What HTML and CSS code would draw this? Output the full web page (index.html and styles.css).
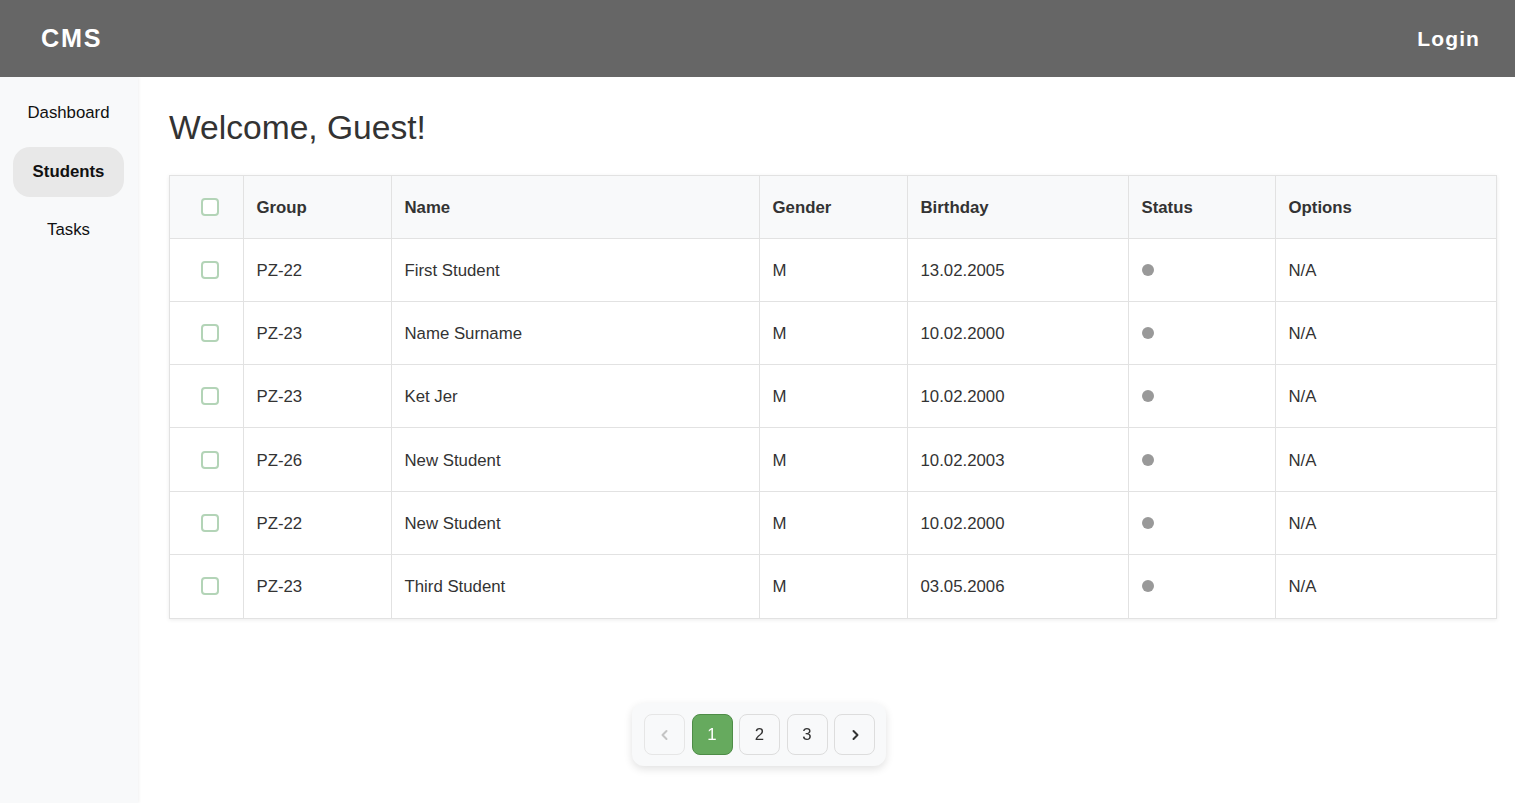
FILE: index.html
```html
<!DOCTYPE html>
<html lang="en">
<head>
<meta charset="utf-8">
<title>CMS</title>
<link rel="stylesheet" href="styles.css">
</head>
<body>
<header class="topbar">
  <div class="logo">CMS</div>
  <div class="login">Login</div>
</header>
<div class="layout">
  <nav class="sidebar">
    <a class="nav-item">Dashboard</a>
    <a class="nav-item active">Students</a>
    <a class="nav-item">Tasks</a>
  </nav>
  <main class="content">
    <h1 class="title">Welcome, Guest!</h1>
    <div class="table-wrap">
      <table class="students">
        <colgroup>
          <col class="c-check"><col class="c-group"><col class="c-name"><col class="c-gender"><col class="c-birth"><col class="c-status"><col class="c-options">
        </colgroup>
        <thead>
          <tr><th class="chk"><span class="box"></span></th><th>Group</th><th>Name</th><th>Gender</th><th>Birthday</th><th>Status</th><th>Options</th></tr>
        </thead>
        <tbody>
          <tr><td class="chk"><span class="box"></span></td><td>PZ-22</td><td>First Student</td><td>M</td><td>13.02.2005</td><td><span class="dot"></span></td><td>N/A</td></tr>
          <tr><td class="chk"><span class="box"></span></td><td>PZ-23</td><td>Name Surname</td><td>M</td><td>10.02.2000</td><td><span class="dot"></span></td><td>N/A</td></tr>
          <tr><td class="chk"><span class="box"></span></td><td>PZ-23</td><td>Ket Jer</td><td>M</td><td>10.02.2000</td><td><span class="dot"></span></td><td>N/A</td></tr>
          <tr><td class="chk"><span class="box"></span></td><td>PZ-26</td><td>New Student</td><td>M</td><td>10.02.2003</td><td><span class="dot"></span></td><td>N/A</td></tr>
          <tr><td class="chk"><span class="box"></span></td><td>PZ-22</td><td>New Student</td><td>M</td><td>10.02.2000</td><td><span class="dot"></span></td><td>N/A</td></tr>
          <tr><td class="chk"><span class="box"></span></td><td>PZ-23</td><td>Third Student</td><td>M</td><td>03.05.2006</td><td><span class="dot"></span></td><td>N/A</td></tr>
        </tbody>
      </table>
    </div>
  </main>
</div>
<div class="pager">
  <button class="pg disabled"><svg width="14" height="14" viewBox="0 0 14 14"><path d="M8.5 3 L4.5 7 L8.5 11" fill="none" stroke="#c4c4c4" stroke-width="2" stroke-linecap="round" stroke-linejoin="round"/></svg></button>
  <button class="pg current">1</button>
  <button class="pg">2</button>
  <button class="pg">3</button>
  <button class="pg"><svg width="14" height="14" viewBox="0 0 14 14"><path d="M5.5 3 L9.5 7 L5.5 11" fill="none" stroke="#333" stroke-width="2" stroke-linecap="round" stroke-linejoin="round"/></svg></button>
</div>
</body>
</html>
```
FILE: styles.css
```css
* { box-sizing: border-box; }
html, body { margin: 0; padding: 0; }
body {
  font-family: "Liberation Sans", Arial, sans-serif;
  font-size: 16.8px;
  color: #333;
  background: #fff;
  min-height: 803px;
}
.topbar {
  height: 77px;
  background: #666;
  color: #fff;
  display: flex;
  align-items: center;
  justify-content: space-between;
  padding: 0 35px 0 41px;
  position: relative;
  z-index: 2;
}
.logo {
  font-weight: bold;
  font-size: 25.2px;
  letter-spacing: 1.8px;
}
.login {
  font-weight: bold;
  font-size: 21px;
  letter-spacing: 1.1px;
}
.layout {
  display: flex;
  min-height: 726px;
}
.sidebar {
  width: 138px;
  flex: 0 0 138px;
  background: #f8f9fa;
  box-shadow: 1px 0 3px rgba(0,0,0,0.06);
  padding: 11px 14px 0 13px;
  display: flex;
  flex-direction: column;
  gap: 8.5px;
  position: relative;
  z-index: 1;
}
.nav-item {
  height: 50px;
  display: flex;
  align-items: center;
  justify-content: center;
  color: #111;
  border-radius: 17px;
  font-size: 16.8px;
}
.nav-item.active {
  background: #e8e8e8;
  font-weight: bold;
}
.content {
  flex: 1;
  padding: 31px 18px 0 31px;
}
.title {
  margin: 0;
  font-weight: normal;
  font-size: 33.6px;
  line-height: 40px;
  color: #333;
}
.table-wrap {
  margin-top: 27px;
  border: 1px solid #e2e2e2;
  box-shadow: 0 1px 4px rgba(0,0,0,0.08);
  background: #fff;
}
.students {
  width: 100%;
  border-collapse: collapse;
  table-layout: fixed;
}
.c-check { width: 73px; }
.c-group { width: 148px; }
.c-name { width: 368px; }
.c-gender { width: 148px; }
.c-birth { width: 221px; }
.c-status { width: 147px; }
.c-options { width: 221px; }
.students th, .students td {
  text-align: left;
  padding: 2px 13px 0 13px;
  border-right: 1px solid #e2e2e2;
  border-bottom: 1px solid #e2e2e2;
  color: #333;
}
.students th:last-child, .students td:last-child { border-right: none; }
.students tbody tr:last-child td { border-bottom: none; }
.students thead th {
  background: #f8f9fa;
  height: 62px;
  font-weight: bold;
}
.students tbody td { height: 63.3px; }
.students .chk { padding: 0 0 0 31px; }
.box {
  display: block;
  width: 18px;
  height: 18px;
  border: 2px solid #b3d4b7;
  border-radius: 4px;
  background: #fff;
}
.dot {
  display: block;
  width: 12px;
  height: 12px;
  border-radius: 50%;
  background: #999;
  margin-top: -2px;
}
.pager {
  position: fixed;
  left: 632px;
  bottom: 37px;
  display: flex;
  gap: 6.5px;
  padding: 11px 11px 11px 12px;
  background: #f8f9fa;
  border-radius: 12px;
  box-shadow: 0 3px 8px rgba(0,0,0,0.12);
}
.pg {
  width: 41px;
  height: 41px;
  border: 1px solid #ddd;
  border-radius: 8px;
  background: #f8f9fa;
  color: #333;
  font-family: "Liberation Sans", Arial, sans-serif;
  font-size: 16.8px;
  display: flex;
  align-items: center;
  justify-content: center;
  padding: 0;
}
.pg.current {
  background: #66aa5e;
  border-color: #4e8c47;
  color: #fff;
}
.pg.disabled { background: #f8f9fa; border-color: #e6e6e6; }
```
